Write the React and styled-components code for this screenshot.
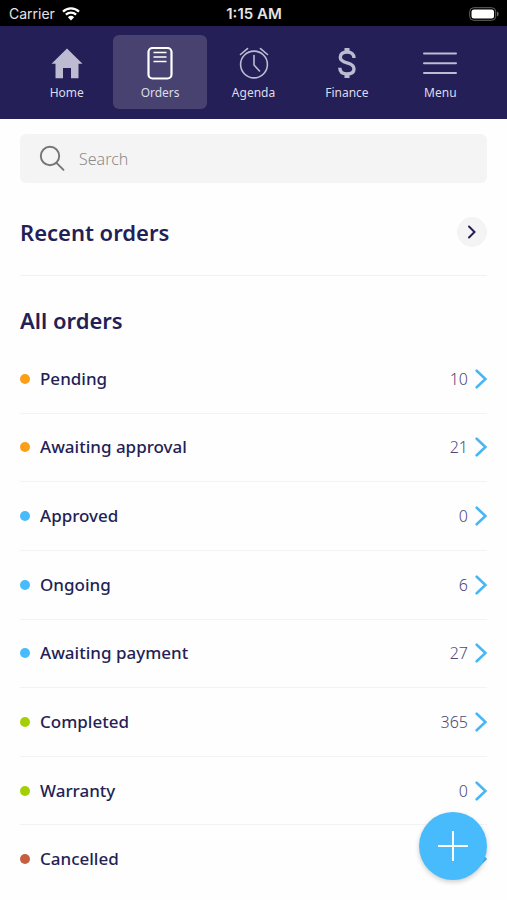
import * as React from 'react'
import styled, { createGlobalStyle } from 'styled-components'

const GlobalStyle = createGlobalStyle`
  * {
    box-sizing: border-box;
  }
  body {
    margin: 0;
    background: #fefefe;
    color: #241f56;
    font-family: 'Noto Sans', 'Open Sans', sans-serif;
  }
`

const tabs = [
  { label: 'Home', icon: <HomeIcon /> },
  { label: 'Orders', icon: <OrdersIcon />, active: true },
  { label: 'Agenda', icon: <AgendaIcon /> },
  { label: 'Finance', icon: <FinanceIcon /> },
  { label: 'Menu', icon: <MenuIcon /> },
]

const statuses = [
  { label: 'Pending', color: '#fa9f16', count: 10 },
  { label: 'Awaiting approval', color: '#fa9f16', count: 21 },
  { label: 'Approved', color: '#47bbfb', count: 0 },
  { label: 'Ongoing', color: '#47bbfb', count: 6 },
  { label: 'Awaiting payment', color: '#47bbfb', count: 27 },
  { label: 'Completed', color: '#a3d004', count: 365 },
  { label: 'Warranty', color: '#a3d004', count: 0 },
  { label: 'Cancelled', color: '#c65f3f' },
]

const Page = styled.div`
  display: flex;
  flex-direction: column;
  min-height: 100vh;
`

const StatusBar = styled.div`
  display: grid;
  grid-template-columns: 1fr auto 1fr;
  align-items: center;
  height: 26px;
  padding: 2px 8px 0 9px;
  background: #000;
  color: #e4e4e4;
  font: 400 14px/20px Inter, 'Liberation Sans', sans-serif;
`

const Carrier = styled.span`
  display: flex;
  align-items: center;
  gap: 7px;
`

const Clock = styled.time`
  font-size: 15px;
  font-weight: 600;
`

const Battery = styled.svg`
  justify-self: end;
`

const TabBar = styled.nav`
  display: flex;
  padding: 9px 20px 10px;
  background: #241f56;
`

const Tab = styled.a`
  flex: 1 1 0;
  display: flex;
  flex-direction: column;
  align-items: center;
  gap: 4px;
  height: 74px;
  padding-top: 11px;
  border-radius: 6px;
  background: ${({ $active }) => ($active ? '#47426f' : 'transparent')};
  color: ${({ $active }) => ($active ? '#fff' : '#bdbbd2')};
  font-size: 12px;
  line-height: 18px;
  text-decoration: none;
  > span {
    color: #dddcea;
  }
`

const Content = styled.main`
  flex: 1;
  display: flex;
  flex-direction: column;
  padding: 15px 20px 6px;
`

const SearchBox = styled.label`
  display: flex;
  align-items: center;
  gap: 14px;
  height: 49px;
  padding: 0 18px;
  border-radius: 6px;
  background: #f4f4f4;
  color: #757575;
`

const SearchInput = styled.input`
  flex: 1;
  min-width: 0;
  padding: 0;
  border: 0;
  outline: 0;
  background: none;
  color: #241f56;
  font: inherit;
  font-size: 16px;
  line-height: 24px;
  &::placeholder {
    color: #8b8b8b;
    font-weight: 300;
    opacity: 1;
  }
`

const SectionHeader = styled.header`
  display: flex;
  align-items: center;
  justify-content: space-between;
  padding: 34px 0 28px;
  border-bottom: 1px solid #f1f1f1;
`

const Heading = styled.h2`
  margin: 0;
  font-size: 22px;
  font-weight: 600;
  line-height: 30px;
`

const ListHeading = styled(Heading)`
  padding: 29px 0 10px;
`

const RoundButton = styled.button`
  display: flex;
  align-items: center;
  justify-content: center;
  width: 30px;
  height: 30px;
  padding: 0;
  border: 0;
  border-radius: 50%;
  background: #f4f4f4;
  color: #241f56;
  cursor: pointer;
`

const StatusList = styled.ul`
  flex: 1;
  display: grid;
  grid-auto-rows: 1fr;
  margin: 0;
  padding: 0;
  list-style: none;
`

const StatusItem = styled.li`
  display: flex;
  border-bottom: 1px solid #f3f3f5;
  &:last-child {
    border-bottom-color: transparent;
  }
`

const StatusLink = styled.a`
  flex: 1;
  display: flex;
  align-items: center;
  min-height: 60px;
  color: inherit;
  font-size: 17px;
  line-height: 24px;
  text-decoration: none;
`

const Dot = styled.span`
  width: 10px;
  height: 10px;
  margin-right: 10px;
  border-radius: 50%;
  background: ${({ $color }) => $color};
`

const Label = styled.span`
  flex: 1;
  font-weight: 500;
`

const Count = styled.span`
  margin-right: 7px;
  color: #4e4a77;
  font-size: 16px;
  font-weight: 300;
`

const AddButton = styled.button`
  position: fixed;
  right: 20px;
  bottom: 20px;
  display: flex;
  align-items: center;
  justify-content: center;
  width: 68px;
  height: 68px;
  padding: 0;
  border: 0;
  border-radius: 50%;
  background: #47bbfb;
  box-shadow: 0 2px 5px rgba(0, 0, 0, 0.2);
  color: #fff;
  cursor: pointer;
`

function HomeIcon() {
  return (
    <svg width="32" height="34" viewBox="0 0 32 34" fill="currentColor">
      <path d="M16 2.5L31.5 17.8h-4V32.300h-7.500V22h-8v10.300H4.500V17.800h-4z" />
    </svg>
  )
}

function OrdersIcon() {
  return (
    <svg width="32" height="34" viewBox="0 0 32 34" fill="none" stroke="currentColor">
      <rect x="4.5" y="2" width="23" height="30.5" rx="4" strokeWidth="2.2" />
      <path d="M9.5 6.5h13M9.5 11h13M9.5 15.5h13" strokeWidth="1.4" />
    </svg>
  )
}

function AgendaIcon() {
  return (
    <svg
      width="32"
      height="34"
      viewBox="0 0 32 34"
      fill="none"
      stroke="currentColor"
      strokeWidth="1.6"
      strokeLinecap="round"
    >
      <circle cx="16" cy="18.5" r="13.4" />
      <path d="M16 9.500v9.500l5.500 6" />
      <path d="M2.500 8.5l7-5.900M29.500 8.5l-7-5.900" />
    </svg>
  )
}

function FinanceIcon() {
  return (
    <svg width="32" height="34" viewBox="0 0 32 34" fill="none" stroke="currentColor">
      <path
        d="M23 12c0-4-2.8-6-7-6s-6.7 2-6.7 5.2c0 3.3 2.7 4.5 6.7 5.6 4.300 1.200 7 2.500 7 5.900 0 3.500-2.900 5.300-7 5.300-4.500 0-7.100-2.300-7.200-6.200"
        strokeWidth="3.4"
      />
      <path d="M16 2v4M16 28v4" strokeWidth="5" />
    </svg>
  )
}

function MenuIcon() {
  return (
    <svg
      width="36"
      height="34"
      viewBox="0 0 36 34"
      stroke="currentColor"
      strokeWidth="2"
      strokeLinecap="round"
    >
      <path d="M2 7.500h32M2 17.300h32M2 27h32" />
    </svg>
  )
}

const WifiIcon = () => (
  <svg width="18" height="14" viewBox="0 0 18 14" fill="none" stroke="#fff">
    <path d="M1 4.700a11.500 11.500 0 0 1 16 0M3.900 7.700a7.400 7.400 0 0 1 10.200 0" strokeWidth="2.300" />
    <path d="M9 13.500L5.900 10.300a4.500 4.500 0 0 1 6.200 0z" fill="#fff" stroke="none" />
  </svg>
)

const SearchIcon = () => (
  <svg
    width="27"
    height="27"
    viewBox="0 0 27 27"
    fill="none"
    stroke="currentColor"
    strokeWidth="1.900"
    strokeLinecap="round"
  >
    <circle cx="12" cy="11" r="9.200" />
    <path d="M18.500 17.800l7 7" />
  </svg>
)

const SmallChevron = () => (
  <svg width="10" height="14" viewBox="0 0 10 14" fill="none" stroke="currentColor" strokeWidth="2">
    <path d="M2 1.500L7.500 7 2 12.500" strokeLinecap="round" />
  </svg>
)

const Chevron = () => (
  <svg width="12" height="20" viewBox="0 0 12 20" fill="none" stroke="#47b6f5" strokeWidth="2.600">
    <path d="M1.700 1.700L10.500 10l-8.800 8.300" strokeLinecap="round" />
  </svg>
)

export default function App() {
  return (
    <Page>
      <GlobalStyle />
      <StatusBar>
        <Carrier>
          Carrier <WifiIcon />
        </Carrier>
        <Clock>1:15 AM</Clock>
        <Battery width="30" height="14" viewBox="0 0 30 14">
          <rect x="0.700" y="0.700" width="26" height="12.600" rx="4" fill="none" stroke="#666" />
          <rect x="2.500" y="2.500" width="22.500" height="9" rx="2.500" fill="#fff" />
          <path d="M28 4.500c2.200 1 2.200 4 0 5z" fill="#666" />
        </Battery>
      </StatusBar>
      <TabBar>
        {tabs.map(({ label, icon, active }) => (
          <Tab
            key={label}
            href={`#${label.toLowerCase()}`}
            $active={active}
            aria-current={active ? 'page' : undefined}
          >
            {icon}
            <span>{label}</span>
          </Tab>
        ))}
      </TabBar>
      <Content>
        <SearchBox>
          <SearchIcon />
          <SearchInput type="search" placeholder="Search" aria-label="Search" />
        </SearchBox>
        <SectionHeader>
          <Heading>Recent orders</Heading>
          <RoundButton aria-label="Show recent orders">
            <SmallChevron />
          </RoundButton>
        </SectionHeader>
        <ListHeading>All orders</ListHeading>
        <StatusList>
          {statuses.map(({ label, color, count }) => (
            <StatusItem key={label}>
              <StatusLink href="#orders">
                <Dot $color={color} />
                <Label>{label}</Label>
                <Count>{count}</Count>
                <Chevron />
              </StatusLink>
            </StatusItem>
          ))}
        </StatusList>
      </Content>
      <AddButton aria-label="Add order">
        <svg width="30" height="30" viewBox="0 0 30 30" stroke="currentColor" strokeWidth="2">
          <path d="M15 0v30M0 15h30" />
        </svg>
      </AddButton>
    </Page>
  )
}
